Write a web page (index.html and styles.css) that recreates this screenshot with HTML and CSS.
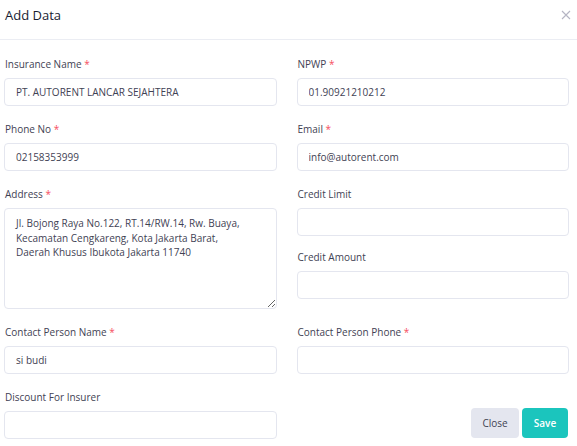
FILE: index.html
```html
<!DOCTYPE html>
<html>
<head>
<meta charset="utf-8">
<link rel="stylesheet" href="styles.css">
</head>
<body>
<div class="modal">
  <div class="modal-header">
    <h5 class="modal-title">Add Data</h5>
    <button class="close" type="button" aria-label="Close">
      <svg width="10" height="10" viewBox="0 0 10 10"><path d="M1 1 L9 9 M9 1 L1 9" stroke="#b5b5c3" stroke-width="1.1" fill="none"/></svg>
    </button>
  </div>
  <form class="modal-body">
    <div class="group">
      <label class="label">Insurance Name <span class="req">*</span></label>
      <input class="input" type="text" value="PT. AUTORENT LANCAR SEJAHTERA">
    </div>
    <div class="group">
      <label class="label">NPWP <span class="req">*</span></label>
      <input class="input" type="text" value="01.90921210212">
    </div>
    <div class="group">
      <label class="label">Phone No <span class="req">*</span></label>
      <input class="input" type="text" value="02158353999">
    </div>
    <div class="group">
      <label class="label">Email <span class="req">*</span></label>
      <input class="input" type="text" value="info@autorent.com">
    </div>
    <div class="group">
      <label class="label">Address <span class="req">*</span></label>
      <textarea class="input textarea">Jl. Bojong Raya No.122, RT.14/RW.14, Rw. Buaya,
Kecamatan Cengkareng, Kota Jakarta Barat,
Daerah Khusus Ibukota Jakarta 11740</textarea>
    </div>
    <div class="stack">
      <div class="group">
        <label class="label">Credit Limit</label>
        <input class="input" type="text">
      </div>
      <div class="group">
        <label class="label">Credit Amount</label>
        <input class="input" type="text">
      </div>
    </div>
    <div class="group">
      <label class="label">Contact Person Name <span class="req">*</span></label>
      <input class="input" type="text" value="si budi">
    </div>
    <div class="group">
      <label class="label">Contact Person Phone <span class="req">*</span></label>
      <input class="input" type="text">
    </div>
    <div class="group">
      <label class="label">Discount For Insurer</label>
      <input class="input" type="text">
    </div>
    <div class="actions">
      <button class="btn btn-light" type="button">Close</button>
      <button class="btn btn-save" type="button">Save</button>
    </div>
  </form>
</div>
</body>
</html>
```
FILE: styles.css
```css
* { box-sizing: border-box; }
html, body { margin: 0; padding: 0; background: #fff; }
body {
  font-family: "Open Sans", "DejaVu Sans", sans-serif;
  color: #3f4254;
  width: 577px;
  height: 446px;
  overflow: hidden;
}
.modal { width: 577px; }
.modal-header {
  height: 40px;
  border-bottom: 1px solid #ebedf3;
  display: flex;
  justify-content: space-between;
  align-items: flex-start;
  padding: 5px 5px 0 5px;
}
.modal-title {
  margin: 0;
  font-size: 13px;
  line-height: 20px;
  font-weight: 500;
  color: #181c32;
}
.close {
  border: 0;
  background: none;
  padding: 0;
  margin: 5px 1px 0 0;
  width: 10px;
  height: 10px;
  display: flex;
}
.modal-body {
  display: grid;
  grid-template-columns: 1fr 1fr;
  column-gap: 20px;
  row-gap: 16px;
  padding: 17px 8px 0 4px;
  margin: 0;
}
.group { display: flex; flex-direction: column; }
.stack { display: flex; flex-direction: column; gap: 14px; }
.label {
  font-size: 10px;
  line-height: 14px;
  margin-bottom: 7px;
  padding-left: 1px;
  color: #3f4254;
}
.req { color: #f64e60; }
.input {
  height: 28px;
  width: 100%;
  border: 1px solid #e4e6ef;
  border-radius: 4px;
  padding: 0 11px;
  font-family: inherit;
  font-size: 10px;
  color: #3f4254;
  background: #fff;
  outline: none;
}
.textarea {
  height: 101px;
  padding: 7px 11px;
  line-height: 14.5px;
  resize: vertical;
  white-space: pre-wrap;
}
.actions {
  display: flex;
  justify-content: flex-end;
  align-items: flex-end;
  gap: 3px;
  padding-bottom: 1px;
  padding-right: 1px;
}
.btn {
  height: 30px;
  border: 0;
  border-radius: 4px;
  font-family: inherit;
  font-size: 10px;
  padding: 0;
}
.btn-light { width: 48px; background: #e4e6ef; color: #3f4254; }
.btn-save { width: 46px; background: #1bc5bd; color: #fff; font-weight: 600; }
```
